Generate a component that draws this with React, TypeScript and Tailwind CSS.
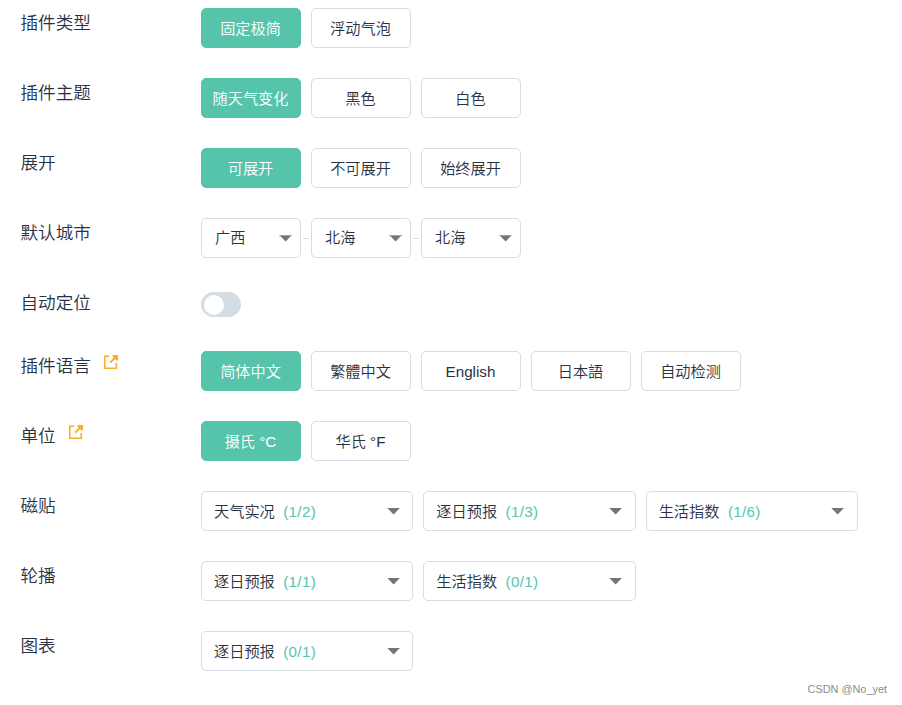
import clsx from 'clsx';
import { Fragment, useState } from 'react';
import type { ReactNode } from 'react';

function Caret({ soft }: { soft?: boolean }) {
  return (
    <svg className="w-[13px] h-[7px] shrink-0" viewBox="0 0 13 7">
      <path d="M0.3 0H12.9L6.6 6.6Z" fill="#757575" />
      {soft && <path d="M0 0H13L12 1H1Z" fill="#a0a0a0" />}
    </svg>
  );
}

function ExternalIcon() {
  return (
    <svg className="w-3.5 h-3.5 shrink-0" viewBox="0 0 14 14" fill="none" stroke="#faad2f" strokeWidth="1.6">
      <path d="M5.2 1.3H0.8V13.2H12.3V8" />
      <path d="M6.2 7.6L12 1.8" strokeWidth="2" />
      <path d="M8.6 0H14V5.4H12.4L8.6 1.6Z" fill="#faad2f" stroke="none" />
    </svg>
  );
}

/**
 * One settings line: a fixed-width label with its controls to the right.
 */
function Row({ label, link, children }: { label: string; link?: boolean; children: ReactNode }) {
  return (
    <div className="flex mb-[30px]">
      <div className="flex w-[180.5px] h-[30px] shrink-0 text-[17.6px] leading-[30px]">
        <span className="whitespace-nowrap">{label}</span>
        {link && (
          <a href="#" className="ml-[13px] mt-1">
            <ExternalIcon />
          </a>
        )}
      </div>
      {children}
    </div>
  );
}

function Options({ items }: { items: string[] }) {
  const [active, setActive] = useState(0);

  return (
    <div className="flex gap-2.5">
      {items.map((item, idx) => (
        <button
          key={item}
          onClick={() => setActive(idx)}
          className={clsx(
            'w-[100px] h-10 pt-px pr-px rounded-[5px] border text-center whitespace-nowrap leading-[38px]',
            idx === active ? 'bg-[#56c4ab] border-[#56c4ab] text-white' : 'bg-white border-[#d4dce4]',
          )}
        >
          {item}
        </button>
      ))}
    </div>
  );
}

function CitySelects({ cities }: { cities: string[] }) {
  return (
    <div className="flex items-center">
      {cities.map((city, idx) => (
        <Fragment key={idx}>
          {idx > 0 && <div className="w-1.5 h-px mx-0.5 bg-[#d4dce4]" />}
          <button className="flex items-center justify-between w-[100px] h-10 pl-[13px] pr-2 rounded-[5px] border border-[#d4dce4] bg-white">
            <span className="leading-[38px]">{city}</span>
            <Caret soft />
          </button>
        </Fragment>
      ))}
    </div>
  );
}

function Toggle() {
  const [on, setOn] = useState(false);

  return (
    <div className="h-[33px] pt-1">
      <button
        role="switch"
        aria-checked={on}
        onClick={() => setOn(!on)}
        className={clsx(
          'flex items-start w-10 h-[25px] px-[3px] pt-[3px] rounded-full',
          on ? 'justify-end bg-[#56c4ab]' : 'bg-[#d4dce4]',
        )}
      >
        <span className="w-5 h-5 rounded-full bg-white" />
      </button>
    </div>
  );
}

function Modules({ items }: { items: [string, string][] }) {
  return (
    <div className="flex gap-2.5">
      {items.map(([name, count]) => (
        <button
          key={name}
          className="flex items-center w-[212.33px] h-10 pl-3 pr-[12.5px] rounded-[5px] border border-[#d4dce4] bg-white"
        >
          <span className="pt-px leading-[38px]">{name}</span>
          <span className="ml-[8.5px] mr-auto pt-0.5 tracking-[0.3px] text-[#56c4ab]">({count})</span>
          <Caret />
        </button>
      ))}
    </div>
  );
}

export default function App() {
  return (
    <div className="h-[705px] overflow-hidden bg-white pt-2 pl-[20.5px] font-[350] font-['Liberation_Sans','Noto_Sans_CJK_SC',sans-serif] text-[15.2px] text-[#293245]">
      <Row label="插件类型">
        <Options items={['固定极简', '浮动气泡']} />
      </Row>
      <Row label="插件主题">
        <Options items={['随天气变化', '黑色', '白色']} />
      </Row>
      <Row label="展开">
        <Options items={['可展开', '不可展开', '始终展开']} />
      </Row>
      <Row label="默认城市">
        <CitySelects cities={['广西', '北海', '北海']} />
      </Row>
      <Row label="自动定位">
        <Toggle />
      </Row>
      <Row label="插件语言" link>
        <Options items={['简体中文', '繁體中文', 'English', '日本語', '自动检测']} />
      </Row>
      <Row label="单位" link>
        <Options items={['摄氏 °C', '华氏 °F']} />
      </Row>
      <Row label="磁贴">
        <Modules items={[['天气实况', '1/2'], ['逐日预报', '1/3'], ['生活指数', '1/6']]} />
      </Row>
      <Row label="轮播">
        <Modules items={[['逐日预报', '1/1'], ['生活指数', '0/1']]} />
      </Row>
      <Row label="图表">
        <Modules items={[['逐日预报', '0/1']]} />
      </Row>
      {/* Watermark */}
      <div className="-mt-5 pr-[15px] text-right text-[10.9px] leading-4 text-[#8b8b8b]">CSDN @No_yet</div>
    </div>
  );
}
